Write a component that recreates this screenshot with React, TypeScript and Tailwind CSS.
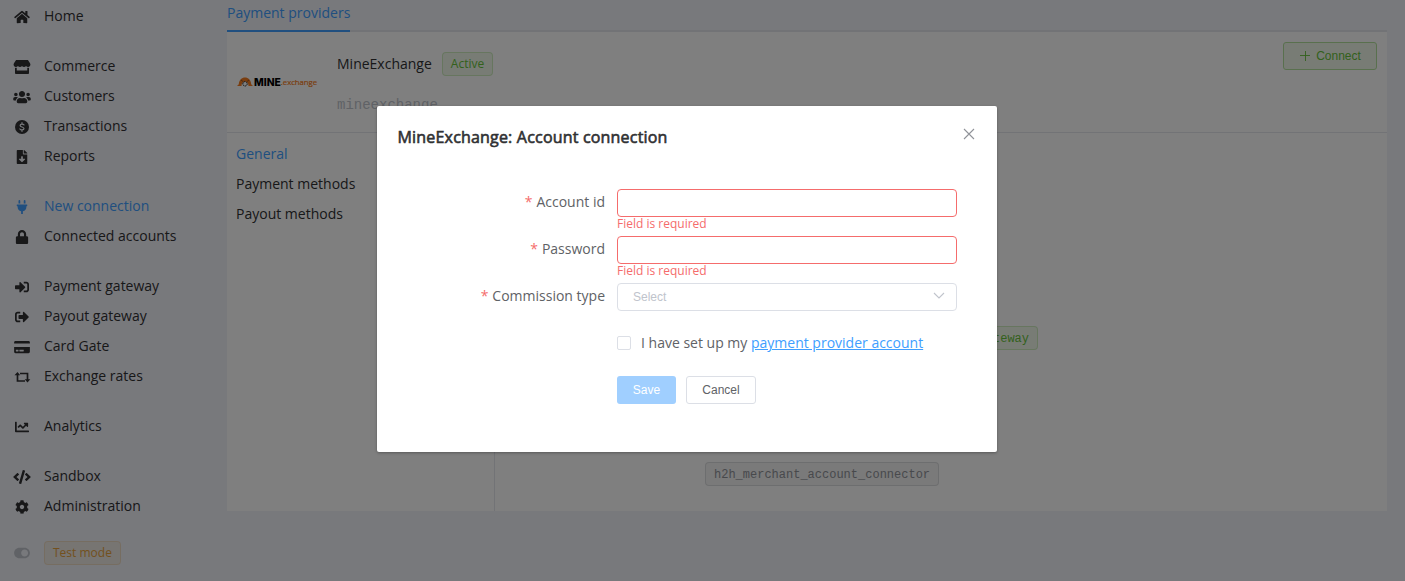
import React from "react";
import {
  FaHome, FaStore, FaUsers, FaFileDownload, FaPlug, FaLock, FaSignInAlt,
  FaSignOutAlt, FaCreditCard, FaChartLine, FaCode, FaCog, FaToggleOn,
} from "react-icons/fa";

type IconType = React.ComponentType<{ className?: string }>;

function DollarCircle({ className }: { className?: string }) {
  return (
    <svg viewBox="0 0 14 14" className={className} fill="none">
      <circle cx="7" cy="7" r="7" fill="currentColor" />
      <path d="M9 4.9C8.6 4.3 7.9 4.1 7 4.1c-1.100 0-1.900.5-1.900 1.350C5.100 7.300 9 6.600 9 8.550 9 9.400 8.200 9.900 7 9.900c-1 0-1.700-.3-2.100-.9M7 2.700v1.400M7 9.900v1.400" stroke="#eff2f8" strokeWidth="1.200" strokeLinecap="round" />
    </svg>
  );
}

function Exchange({ className }: { className?: string }) {
  return (
    <svg viewBox="0 0 18 14" className={className} fill="none">
      <path d="M4.500 4v7H12M7 3.500h7.500V10" stroke="currentColor" strokeWidth="1.700" />
      <path d="M4.500 2 7.200 5.200H1.500zM14.500 12.500l-2.800-3.300h5.600z" fill="currentColor" />
    </svg>
  );
}

const groups: { label: string; icon: IconType; active?: boolean }[][] = [
  [{ label: "Home", icon: FaHome }],
  [
    { label: "Commerce", icon: FaStore },
    { label: "Customers", icon: FaUsers },
    { label: "Transactions", icon: DollarCircle },
    { label: "Reports", icon: FaFileDownload },
  ],
  [
    { label: "New connection", icon: FaPlug, active: true },
    { label: "Connected accounts", icon: FaLock },
  ],
  [
    { label: "Payment gateway", icon: FaSignInAlt },
    { label: "Payout gateway", icon: FaSignOutAlt },
    { label: "Card Gate", icon: FaCreditCard },
    { label: "Exchange rates", icon: Exchange },
  ],
  [{ label: "Analytics", icon: FaChartLine }],
  [
    { label: "Sandbox", icon: FaCode },
    { label: "Administration", icon: FaCog },
  ],
];

function Sidebar() {
  return (
    <nav className="flex w-[227px] shrink-0 flex-col gap-5 pl-[13px] pt-px">
      {groups.map((items, i) => (
        <div key={i}>
          {items.map(({ label, icon: Icon, active }) => (
            <div key={label} className={`flex h-[30px] items-center gap-[13px] ${active ? "text-[#409eff]" : "text-[#303133]"}`}>
              <Icon className="mt-px h-[14px] w-[18px]" />
              <span>{label}</span>
            </div>
          ))}
        </div>
      ))}
      <div className="flex h-6 items-center gap-[13px]">
        <FaToggleOn className="h-[14px] w-[18px] text-[#c0c4cc]" />
        <span className="flex h-6 items-center rounded border border-[#e6a23c]/20 bg-[#e6a23c]/10 px-2 text-xs text-[#e6a23c]">Test mode</span>
      </div>
    </nav>
  );
}

function Logo() {
  return (
    <div className="flex w-20 items-center">
      <svg viewBox="0 0 16 10" className="h-[10px] w-4 shrink-0">
        <path d="M0 9 1.800 7.200C2 3.200 4.800.6 8 .6S14 3.200 14.200 7.200L16 9h-4.500C11.500 6 10 4.800 8 4.800S4.500 6 4.500 9Z" fill="#f57c20" />
        <circle cx="8" cy="6.800" r="2.200" fill="#fff" stroke="#222" strokeDasharray="1.500 .5" />
        <path d="M4 3 6 4.500M12 3 10 4.500" stroke="#333" strokeWidth=".5" />
      </svg>
      <span className="ml-px font-['Inter',sans-serif] text-[10.300px] font-extrabold leading-none text-black">MINE</span>
      <span className="mt-[2px] text-[7.700px] leading-none text-[#f47b20] [-webkit-text-stroke:0.200px_#f47b20]">.exchange</span>
    </div>
  );
}

function Page() {
  return (
    <main className="w-[1160px] shrink-0">
      <div className="flex h-8 border-b-2 border-[#e4e7ed]">
        <div className="h-8 border-b-2 border-[#409eff] pt-[3px] leading-5 text-[#409eff]">Payment providers</div>
      </div>
      <section className="flex h-[479px] flex-col bg-white">
        <header className="flex h-[101px] shrink-0 border-b border-[#e4e7ed] pl-[10px] pr-[10px]">
          <div className="flex h-[100px] items-center"><Logo /></div>
          <div className="ml-5 pt-5">
            <div className="flex h-6 items-center gap-[10px] text-[#303133]">
              MineExchange
              <span className="flex h-6 items-center rounded border border-[#67c23a]/25 bg-[#67c23a]/10 px-2 text-xs text-[#67c23a]">Active</span>
            </div>
            <div className="mt-[19px] font-['Liberation_Mono',monospace] leading-5 text-[#c0c4cc]">mineexchange</div>
          </div>
          <button className="ml-auto mt-[10px] flex h-7 w-[94px] items-center justify-center rounded-[3px] border border-[#b3e19d] bg-[#f0f9eb] font-['Liberation_Sans',sans-serif] text-xs text-[#67c23a]">
            <svg viewBox="0 0 12 12" className="mr-[5px] h-3 w-3" stroke="currentColor" strokeWidth=".9"><path d="M6.500 1v10M1 5.500h10" /></svg>
            Connect
          </button>
        </header>
        <div className="flex grow">
          <div className="w-[268px] shrink-0 border-r border-[#e4e7ed] pl-[9px] pt-[6px] leading-[30px] text-[#303133]">
            <div className="text-[#409eff]">General</div>
            <div>Payment methods</div>
            <div>Payout methods</div>
          </div>
          <div className="flex w-[543px] flex-col pl-[210px] pt-[193px] font-['Liberation_Mono',monospace] text-xs">
            <span className="flex h-6 items-center self-end rounded border border-[#67c23a]/25 bg-[#67c23a]/10 px-2 pt-px text-[#67c23a]">gateway</span>
            <span className="mt-28 flex h-6 items-center self-start rounded border border-[#909399]/25 bg-[#909399]/10 px-2 pt-px text-[#909399]">h2h_merchant_account_connector</span>
          </div>
        </div>
      </section>
    </main>
  );
}

function Field({ label, error, children }: { label: string; error?: string; children: React.ReactNode }) {
  return (
    <div className="flex h-[47px]">
      <label className="w-[228px] pt-[3px] pr-3 text-right leading-5 text-[#606266]">
        <span className="mr-1 text-[#f56c6c]">*</span>{label}
      </label>
      <div className="w-[340px]">
        {children}
        {error && <div className="text-xs leading-[14px] text-[#f56c6c]">{error}</div>}
      </div>
    </div>
  );
}

function Dialog() {
  return (
    <div role="dialog" className="mt-[106px] ml-[377px] h-[346px] w-[620px] rounded-[2px] bg-white pl-5 shadow-[0_1px_3px_rgba(0,0,0,0.3)]">
      <header className="flex h-[83px] justify-between pt-[19px] pr-[22px]">
        <h2 className="ml-[0.500px] text-base leading-6 tracking-[0.190px] text-[#303133] [-webkit-text-stroke:0.600px_#303133]">MineExchange: Account connection</h2>
        <svg viewBox="0 0 12 12" className="mt-[3px] h-3 w-3" stroke="#909399" strokeWidth="1.100"><path d="m1 1 10 10M11 1 1 11" /></svg>
      </header>
      <form className="-ml-5 pl-3">
        <Field label="Account id" error="Field is required">
          <input className="block h-7 w-full rounded border border-[#f56c6c] px-[15px] outline-none" />
        </Field>
        <Field label="Password" error="Field is required">
          <input type="password" className="block h-7 w-full rounded border border-[#f56c6c] px-[15px] outline-none" />
        </Field>
        <Field label="Commission type">
          <div className="flex h-7 items-center justify-between rounded border border-[#dcdfe6] pl-[15px] pr-[11px] font-['Liberation_Sans',sans-serif] text-xs text-[#c0c4cc]">
            Select
            <svg viewBox="0 0 12 8" className="mb-[2px] h-2 w-3" fill="none" stroke="currentColor" strokeWidth="1.100"><path d="m1 1 5 5 5-5" /></svg>
          </div>
        </Field>
        <div className="ml-[228px] -mt-px flex h-7 items-center text-[#606266]">
          <span className="mr-[10px] h-[14px] w-[14px] rounded-[2px] border border-[#dcdfe6]" />
          <span>I have set up my <a className="text-[#409eff] underline">payment provider account</a></span>
        </div>
        <div className="ml-[228px] mt-[19px] flex gap-[10px] font-['Liberation_Sans',sans-serif] text-xs">
          <button type="button" className="h-7 w-[59px] rounded-[3px] bg-[#a0cfff] text-white">Save</button>
          <button type="button" className="h-7 w-[70px] rounded-[3px] border border-[#dcdfe6] text-[#606266]">Cancel</button>
        </div>
      </form>
    </div>
  );
}

export default function App() {
  return (
    <div className="relative h-[581px] w-[1405px] overflow-hidden bg-[#f0f2f9] font-['Open_Sans',sans-serif] text-sm">
      <div className="flex">
        <Sidebar />
        <Page />
      </div>
      <div className="absolute inset-0 flex items-start bg-black/50">
        <Dialog />
      </div>
    </div>
  );
}
